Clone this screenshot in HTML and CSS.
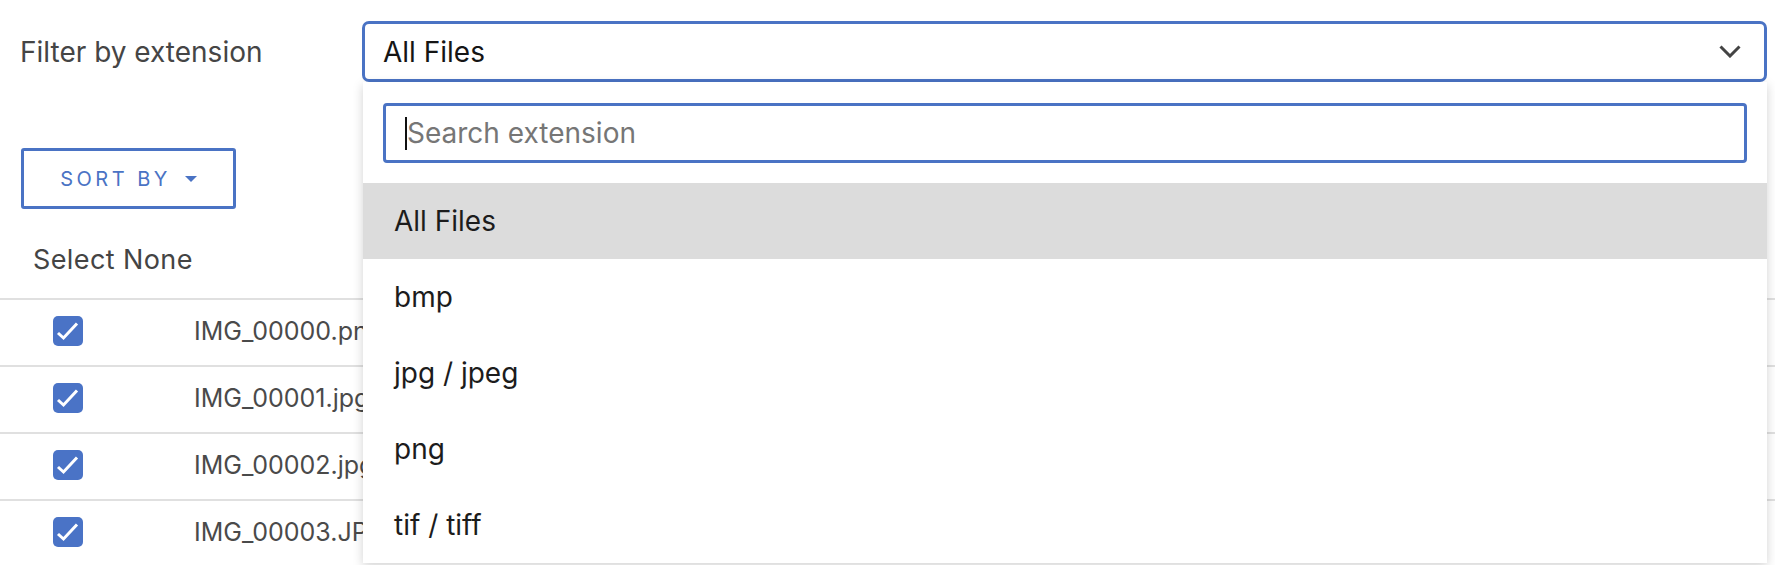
FILE: index.html
```html
<!DOCTYPE html>
<html lang="en">

<head>
    <meta charset="UTF-8" />
    <meta name="viewport" content="width=device-width, initial-scale=1.0" />
    <title>Files</title>
    <link rel="stylesheet" href="styles.css">
</head>

<body>
    <div class="filter-row">
        <label class="filter-label">Filter by extension</label>
        <div class="select-wrap">
            <div class="select">
                <span>All Files</span>
                <svg class="chevron" width="22" height="13" viewBox="0 0 22 13">
                    <polyline points="1.5,1.5 11,11 20.5,1.5" fill="none" stroke="#444" stroke-width="3" />
                </svg>
            </div>
            <div class="dropdown">
                <div class="search-box">
                    <span class="caret"></span>
                    <input type="text" placeholder="Search extension">
                </div>
                <ul class="options">
                    <li class="active">All Files</li>
                    <li>bmp</li>
                    <li>jpg / jpeg</li>
                    <li>png</li>
                    <li>tif / tiff</li>
                </ul>
            </div>
        </div>
    </div>

    <button class="sort-btn">SORT BY<span class="tri"></span></button>

    <div class="select-none">Select None</div>

    <div class="file-list">
        <div class="file-row">
            <span class="checkbox"><svg width="30" height="30" viewBox="0 0 30 30"><polyline points="5,17 10.5,22 24,7.5" fill="none" stroke="#fff" stroke-width="3" /></svg></span>
            <span class="file-name">IMG_00000.png</span>
        </div>
        <div class="file-row">
            <span class="checkbox"><svg width="30" height="30" viewBox="0 0 30 30"><polyline points="5,17 10.5,22 24,7.5" fill="none" stroke="#fff" stroke-width="3" /></svg></span>
            <span class="file-name">IMG_00001.jpg</span>
        </div>
        <div class="file-row">
            <span class="checkbox"><svg width="30" height="30" viewBox="0 0 30 30"><polyline points="5,17 10.5,22 24,7.5" fill="none" stroke="#fff" stroke-width="3" /></svg></span>
            <span class="file-name">IMG_00002.jpg</span>
        </div>
        <div class="file-row">
            <span class="checkbox"><svg width="30" height="30" viewBox="0 0 30 30"><polyline points="5,17 10.5,22 24,7.5" fill="none" stroke="#fff" stroke-width="3" /></svg></span>
            <span class="file-name">IMG_00003.JPG</span>
        </div>
    </div>
</body>

</html>
```

FILE: styles.css
```css
* {
    box-sizing: border-box;
}

body {
    margin: 0;
    padding-top: 21px;
    font-family: "Inter", "Noto Sans", sans-serif;
    background-color: white;
    color: #222;
    height: 100vh;
    overflow: hidden;
}

.filter-row {
    display: flex;
    align-items: center;
    padding: 0 8px 0 20px;
}

.filter-label {
    width: 342px;
    font-size: 28px;
    color: #454545;
}

.select-wrap {
    flex-grow: 1;
    position: relative;
}

.select {
    height: 61px;
    border: 3px solid #4a73c4;
    border-radius: 7px;
    padding: 0 23px 0 18px;
    display: flex;
    align-items: center;
    justify-content: space-between;
    font-size: 28px;
    color: #151515;
}

.dropdown {
    position: absolute;
    top: 100%;
    left: 1px;
    right: 0;
    background-color: white;
    padding: 21px 20px 0;
    box-shadow: 0 3px 10px rgba(0, 0, 0, 0.18);
    z-index: 10;
}

.search-box {
    height: 60px;
    border: 3px solid #4a73c4;
    border-radius: 4px;
    display: flex;
    align-items: center;
    padding-left: 19px;
}

.caret {
    width: 2px;
    height: 33px;
    background-color: #111;
}

.search-box input {
    flex-grow: 1;
    border: none;
    outline: none;
    padding: 0;
    font-family: inherit;
    font-size: 28px;
    color: #222;
}

.search-box input::placeholder {
    color: #767676;
}

.options {
    list-style: none;
    margin: 20px -20px 0;
    padding: 0;
}

.options li {
    height: 76px;
    display: flex;
    align-items: center;
    padding-left: 31px;
    font-size: 28px;
    color: #1c1c1c;
}

.options li.active {
    background-color: #dcdcdc;
}

.sort-btn {
    margin: 66px 0 0 21px;
    width: 215px;
    height: 61px;
    border: 3px solid #4a73c4;
    border-radius: 3px;
    background-color: white;
    color: #4a73c4;
    font-family: inherit;
    font-size: 20px;
    letter-spacing: 3.5px;
    display: flex;
    align-items: center;
    justify-content: center;
    gap: 14px;
    padding: 0;
}

.tri {
    width: 0;
    height: 0;
    border-left: 6px solid transparent;
    border-right: 6px solid transparent;
    border-top: 6px solid #4a73c4;
}

.select-none {
    margin: 35px 0 22px;
    padding-left: 33px;
    font-size: 27px;
    letter-spacing: 0.4px;
    line-height: 32px;
    color: #444;
}

.file-row {
    height: 67px;
    border-top: 2px solid #e0e0e0;
    display: flex;
    align-items: center;
    padding: 0 0 3px 53px;
}

.checkbox {
    width: 30px;
    height: 30px;
    border-radius: 5px;
    background-color: #4a73c6;
    display: flex;
}

.file-name {
    margin-left: 111px;
    font-size: 25px;
    color: #4a4a4a;
}
```
